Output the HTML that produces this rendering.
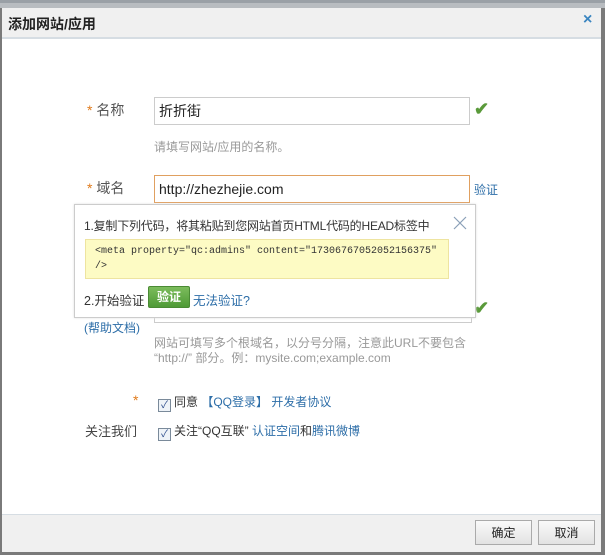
<!DOCTYPE html><html><head><meta charset="utf-8"><style>
body{margin:0;width:605px;height:555px;background:#7a7a7a;position:relative;overflow:hidden;font-family:"Liberation Sans","Noto Sans CJK SC",sans-serif;font-size:12px;color:#333}
.a{position:absolute;white-space:nowrap}
.blue{color:#2d6ea8}
.gray{color:#999}
.star{color:#e07a1a}
.inp{position:absolute;background:#fff;border:1px solid #ccc;height:28px;box-sizing:border-box;font-size:14px;line-height:26px;padding-left:4px;color:#222}
.chk{display:inline-block;width:11px;height:11px;border:1px solid #7a8a9a;background:#eef3f8;vertical-align:-2px;margin-right:3px;font-size:10px;line-height:11px;text-align:center;color:#2a4a8a}
.btn{position:absolute;top:520px;width:57px;height:25px;border:1px solid #aaa;background:linear-gradient(#fafafa,#e2e2e2);font-size:12px;text-align:center;line-height:25px;color:#222;box-sizing:border-box}
</style></head><body>
<div class="a" style="left:0;top:0;width:605px;height:3px;background:#9aa0a6"></div>
<div class="a" style="left:0;top:3px;width:605px;height:5px;background:#b8bcc0"></div>
<div class="a" style="left:2px;top:8px;width:599px;height:543px;background:#fff"></div>
<div class="a" style="left:2px;top:8px;width:599px;height:29px;background:#f0f0f0;border-bottom:2px solid #d6dde3"></div>
<div class="a" style="left:8px;top:14px;font-size:14px;font-weight:bold;color:#222">添加网站/应用</div>
<div class="a" style="left:583px;top:11px;font-size:16px;font-weight:bold;color:#3a85c0">×</div>

<div class="a" style="left:87px;top:100px;font-size:14px;color:#555"><span class="star">*</span> 名称</div>
<div class="inp" style="left:154px;top:97px;width:316px">折折街</div>
<div class="a" style="left:474px;top:99px;font-size:18px;color:#5a9a3a;font-weight:bold">✔</div>
<div class="a gray" style="left:154px;top:138px">请填写网站/应用的名称。</div>

<div class="a" style="left:87px;top:178px;font-size:14px;color:#555"><span class="star">*</span> 域名</div>
<div class="inp" style="left:154px;top:175px;width:316px;border-color:#e0a060">http://zhezhejie.com</div>
<div class="a blue" style="left:474px;top:181px">验证</div>

<div class="a" style="left:154px;top:300px;width:316px;height:22px;border:1px solid #ccc;border-top:none"></div>
<div class="a" style="left:474px;top:298px;font-size:18px;color:#5a9a3a;font-weight:bold">✔</div>
<div class="a blue" style="left:84px;top:319px">(帮助文档)</div>
<div class="a gray" style="left:154px;top:336px;line-height:15px">网站可填写多个根域名，以分号分隔，注意此URL不要包含<br>“http://” 部分。例：mysite.com;example.com</div>

<div class="a" style="left:74px;top:204px;width:400px;height:112px;background:#fff;border:1px solid #ccc;box-shadow:0 0 2px #ddd"></div>
<div class="a" style="left:84px;top:217px;font-size:12px;color:#333;letter-spacing:-0.2px">1.复制下列代码，将其粘贴到您网站首页HTML代码的HEAD标签中</div>
<svg class="a" style="left:453px;top:216px" width="14" height="14"><path d="M1 1L13 13M13 1L1 13" stroke="#8aa0b8" stroke-width="1.2"/></svg>
<div class="a" style="left:85px;top:239px;width:364px;height:40px;background:#fdfbc4;border:1px solid #eee4a0;font-family:'Liberation Mono',monospace;font-size:10px;line-height:15px;padding:4px 0 0 9px;box-sizing:border-box;color:#333">&lt;meta property="qc:admins" content="17306767052052156375"<br>/&gt;</div>
<div class="a" style="left:84px;top:290px;font-size:12.5px">2.开始验证</div>
<div class="a" style="left:148px;top:286px;width:40px;height:20px;background:linear-gradient(#7cbc5c,#4e9a36);border:1px solid #4a8a34;border-radius:2px;color:#fff;font-weight:bold;text-align:center;line-height:20px">验证</div>
<div class="a blue" style="left:193px;top:290px;font-size:12.5px">无法验证?</div>

<div class="a star" style="left:133px;top:392px;font-size:14px">*</div>
<div class="a" style="left:158px;top:393px"><span class="chk">✓</span>同意 <span class="blue">【QQ登录】 开发者协议</span></div>
<div class="a" style="left:85px;top:421px;font-size:13px;color:#444">关注我们</div>
<div class="a" style="left:158px;top:422px"><span class="chk">✓</span>关注“QQ互联” <span class="blue">认证空间</span>和<span class="blue">腾讯微博</span></div>

<div class="a" style="left:2px;top:514px;width:599px;height:37px;background:#f0f0f0;border-top:1px solid #d6dde3"></div>
<div class="btn" style="left:475px">确定</div>
<div class="btn" style="left:538px">取消</div>
</body></html>
